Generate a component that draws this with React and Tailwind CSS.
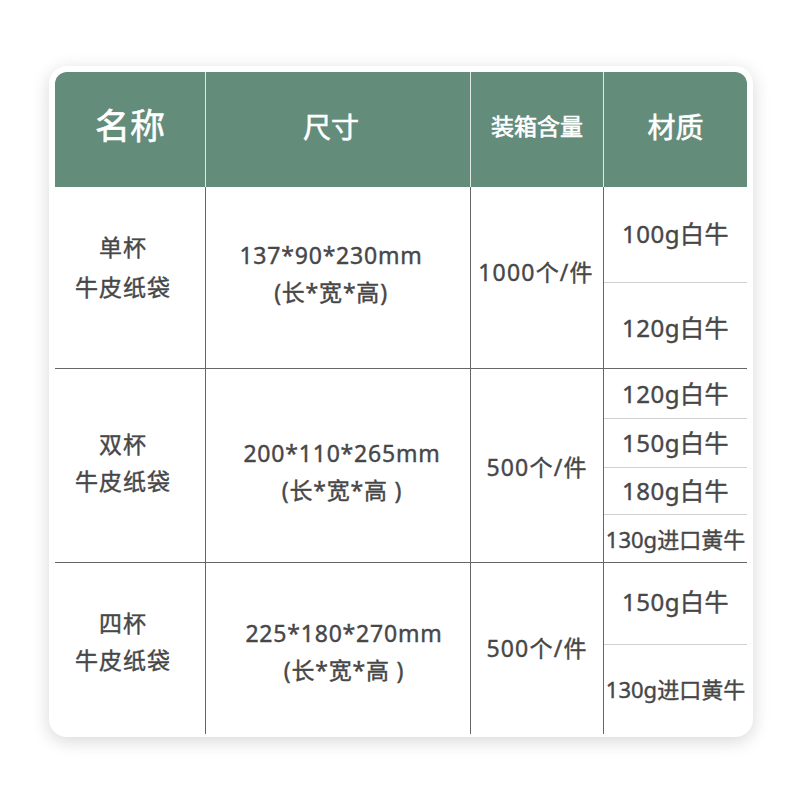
import React from 'react';

const rows = [
  {
    name: ['单杯', '牛皮纸袋'],
    size: ['137*90*230mm', '(长*宽*高)'],
    pack: '1000个/件',
    height: 'h-[181px]',
    nameCls: 'pb-[22px] leading-[40px]',
    sizeCls: 'pb-[8px] pr-[14px]',
    packCls: 'pb-[10px] pr-[2px]',
    materials: [
      { text: '100g白牛', h: 'h-[95px] pb-[2px]' },
      { text: '120g白牛', h: 'h-[86px] pt-[4px]' },
    ],
  },
  {
    name: ['双杯', '牛皮纸袋'],
    size: ['200*110*265mm', '(长*宽*高 )'],
    pack: '500个/件',
    height: 'h-[194px]',
    nameCls: 'pb-[6px] leading-[37px]',
    sizeCls: 'pt-[12px] pl-[8px]',
    packCls: 'pt-[2px]',
    materials: [
      { text: '120g白牛', h: 'h-[49px]' },
      { text: '150g白牛', h: 'h-[49px]' },
      { text: '180g白牛', h: 'h-[47px]' },
      { text: '130g进口黄牛', h: 'h-[49px]', small: true },
    ],
  },
  {
    name: ['四杯', '牛皮纸袋'],
    size: ['225*180*270mm', '(长*宽*高 )'],
    pack: '500个/件',
    height: 'h-[171px]',
    nameCls: 'pb-[14px] leading-[37px]',
    sizeCls: 'pt-[6px] pl-[12px]',
    packCls: 'pt-[0px]',
    materials: [
      { text: '150g白牛', h: 'h-[81px] pb-[4px]' },
      { text: '130g进口黄牛', h: 'h-[90px]', small: true },
    ],
  },
];

export default function App() {
  return (
    <div
      className="w-[800px] h-[800px] bg-white pt-[66px] pl-[49px]"
      style={{ fontFamily: '"Noto Sans", "Noto Sans CJK SC", sans-serif' }}
    >
      <div className="w-[704px] bg-white rounded-[18px] p-[6px] pb-[4px] shadow-[0_4px_18px_rgba(0,0,0,0.16)]">
        {/* Header */}
        <div className="grid grid-cols-[150px_265px_133px_144px] h-[115px] bg-[#638c7b] rounded-t-[12px] text-white [-webkit-text-stroke:0.6px_#ffffff]">
          <div className="flex items-center justify-center text-[35px] pb-[6px]">名称</div>
          <div className="flex items-center justify-center text-[28px] pb-[6px] pr-[14px] border-l border-white/80">尺寸</div>
          <div className="flex items-center justify-center text-[23px] pb-[6px] border-l border-white/80">装箱含量</div>
          <div className="flex items-center justify-center text-[28px] pb-[6px] border-l border-white/80">材质</div>
        </div>

        {/* Body */}
        {rows.map((row, i) => (
          <div
            key={i}
            className={`grid grid-cols-[150px_265px_133px_144px] ${row.height} text-[#474747] [-webkit-text-stroke:0.4px_#474747] ${
              i > 0 ? 'border-t border-[#666]' : ''
            }`}
          >
            <div className={`flex flex-col items-center justify-center text-[23px] tracking-[1px] pr-[14px] ${row.nameCls}`}>
              {row.name.map((t) => (
                <span key={t}>{t}</span>
              ))}
            </div>
            <div
              className={`flex flex-col items-center justify-center text-[23px] leading-[37px] tracking-[0.8px] border-l border-[#666] ${row.sizeCls}`}
            >
              {row.size.map((t) => (
                <span key={t}>{t}</span>
              ))}
            </div>
            <div className={`flex items-center justify-center text-[23px] tracking-[1.2px] border-l border-[#666] ${row.packCls}`}>
              {row.pack}
            </div>
            <div className="flex flex-col border-l border-[#666]">
              {row.materials.map((m, j) => (
                <div
                  key={j}
                  className={`${m.h} flex items-center justify-center ${
                    m.small ? 'text-[22px]' : 'text-[24px] tracking-[0.5px]'
                  } ${j > 0 ? 'border-t border-[#d0d0d0]' : ''}`}
                >
                  {m.text}
                </div>
              ))}
            </div>
          </div>
        ))}
      </div>
    </div>
  );
}
